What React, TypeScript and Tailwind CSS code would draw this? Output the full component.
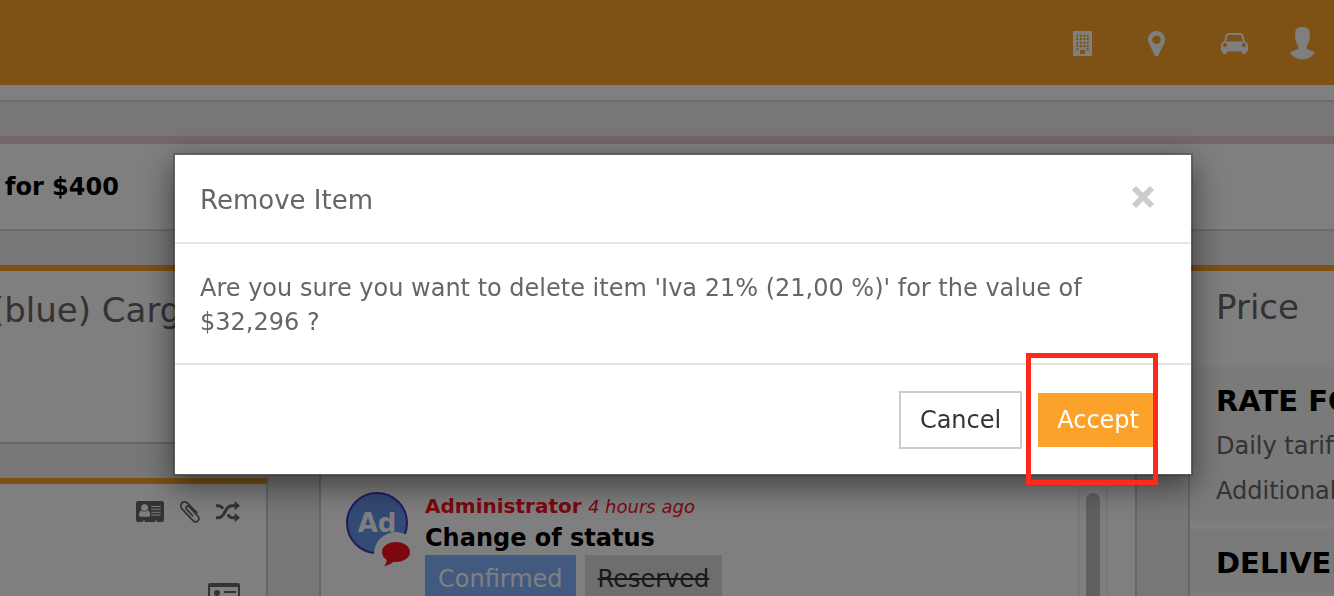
import { useState } from "react";

interface IconProps {
  className?: string;
}

const BuildingIcon = ({ className }: IconProps) => (
  <svg viewBox="0 0 57 75" fill="currentColor" className={className} aria-hidden="true">
    <path
      fillRule="evenodd"
      d="M2 0h53a2 2 0 0 1 2 2v71a2 2 0 0 1-2 2H2a2 2 0 0 1-2-2V2a2 2 0 0 1 2-2z
      M10 11v6h6v-6z M21 11v6h6v-6z M31 11v6h6v-6z M41 11v6h6v-6z
      M10 21v6h6v-6z M21 21v6h6v-6z M31 21v6h6v-6z M41 21v6h6v-6z
      M10 32v6h6v-6z M21 32v6h6v-6z M31 32v6h6v-6z M41 32v6h6v-6z
      M10 42v6h6v-6z M21 42v6h6v-6z M31 42v6h6v-6z M41 42v6h6v-6z
      M10 52v6h6v-6z M41 52v6h6v-6z M21 57v11h15V57z"
    />
  </svg>
);

const PinIcon = ({ className }: IconProps) => (
  <svg viewBox="0 0 52 79" fill="currentColor" className={className} aria-hidden="true">
    <path
      fillRule="evenodd"
      d="M26 0C11 0 0 12 0 26c0 5 1 9 3 13l18 37c2 4 8 4 10 0l18-37c2-4 3-8 3-13C52 12 41 0 26 0z M26 14a13 13 0 1 1 0 26a13 13 0 0 1 0-26z"
    />
  </svg>
);

const CarIcon = ({ className }: IconProps) => (
  <svg viewBox="0 0 79 64" fill="currentColor" className={className} aria-hidden="true">
    <path
      fillRule="evenodd"
      d="M23 0h33c5 0 9 3 10 8l4 17c5 1 9 5 9 10v17c0 1-1 2-2 2h-3v4c0 8-12 8-12 0v-4H17v4c0 8-12 8-12 0v-4H2c-1 0-2-1-2-2V35c0-5 4-9 9-10l4-17c1-5 5-8 10-8z
      M23 6c-2 0-3 1-4 3l-4 16h49L60 9c-1-2-2-3-4-3z
      M12 29a6 6 0 1 0 0 12a6 6 0 0 0 0-12z M67 29a6 6 0 1 0 0 12a6 6 0 0 0 0-12z"
    />
  </svg>
);

const UserIcon = ({ className }: IconProps) => (
  <svg viewBox="0 0 76 98" fill="currentColor" className={className} aria-hidden="true">
    <path d="M38 0c14 0 21 5 22 16v14c1 4 0 8-2 12c-2 6-4 12-7 16v8c4 5 19 6 25 12c-9 12-22 20-38 20S9 90 0 78c6-6 21-7 25-12v-8c-3-4-5-10-7-16c-2-4-3-8-2-12V16C17 5 24 0 38 0z" />
  </svg>
);

const AddressCardIcon = ({ className }: IconProps) => (
  <svg viewBox="0 0 83 63" fill="currentColor" className={className} aria-hidden="true">
    <path
      fillRule="evenodd"
      d="M6 0h71a6 6 0 0 1 6 6v50a6 6 0 0 1-6 6H62v-4h-5v4H26v-4h-5v4H6a6 6 0 0 1-6-6V6a6 6 0 0 1 6-6z
      M25 10c-7 0-10 5-10 10c0 3 1 6 3 8c-6 0-9 6-9 13c0 4 2 6 5 6h23c3 0 5-2 5-6c0-7-3-13-9-13c2-2 3-5 3-8c0-5-4-10-11-10z
      M45 15v3h28v-3z M45 23v3h28v-3z M45 32v3h28v-3z M45 40v3h28v-3z"
    />
    <path d="M17 28q8 6 16 0" fill="none" stroke="currentColor" strokeWidth="2" />
  </svg>
);

const PaperclipIcon = ({ className }: IconProps) => (
  <svg
    viewBox="0 0 57 63"
    fill="none"
    stroke="currentColor"
    strokeWidth="5"
    strokeLinecap="round"
    strokeLinejoin="round"
    className={className}
    aria-hidden="true"
  >
    <path d="M36 42L19 24c-5-6 2-13 8-7l23 25c10 11-3 24-13 14L7 24C-5 11 10-5 22 7l26 26" />
  </svg>
);

const ShuffleIcon = ({ className }: IconProps) => (
  <svg viewBox="0 0 72 64" fill="currentColor" className={className} aria-hidden="true">
    <path d="M56 0l16 14l-16 14z M56 36l16 14l-16 14z" />
    <path
      fill="none"
      stroke="currentColor"
      strokeWidth="9"
      d="M0 14h7c6 0 10 3 14 9 M35 41c4 6 8 9 14 9h8 M0 50h7c9 0 14-6 18-14l5-9c4-8 9-13 18-13h9"
    />
  </svg>
);

const ContactIcon = ({ className }: IconProps) => (
  <svg viewBox="0 0 96 72" fill="currentColor" className={className} aria-hidden="true">
    <path
      fillRule="evenodd"
      d="M6 0h84a6 6 0 0 1 6 6v60a6 6 0 0 1-6 6H6a6 6 0 0 1-6-6V6a6 6 0 0 1 6-6z M6 12v54h84V12z"
    />
    <circle cx="27" cy="30" r="9" />
    <path d="M48 24h36v6H48z M48 42h36v6H48z M14 56c0-18 26-18 26 0z" />
  </svg>
);

const CommentIcon = ({ className }: IconProps) => (
  <svg viewBox="0 0 84 72" fill="currentColor" className={className} aria-hidden="true">
    <path d="M42 0c23 0 42 13 42 30S65 60 42 60c-2 0-5 0-7-1c-8 7-17 11-29 13c4-4 8-9 8-18C5 48 0 40 0 30C0 13 19 0 42 0z" />
  </svg>
);

const navItems = [
  { label: "Buildings", icon: <BuildingIcon className="w-[19px]" /> },
  { label: "Locations", icon: <PinIcon className="w-[17px]" /> },
  { label: "Vehicles", icon: <CarIcon className="w-[27px]" /> },
];

const prices = [
  { title: "RATE FOR", lines: ["Daily tariff", "Additional"] },
  { title: "DELIVERY", lines: [] },
];

function Header() {
  return (
    <header className="flex h-[85px] shrink-0 items-center justify-end gap-[42px] bg-[#fca22a] pt-0.5 pr-[19px] text-white">
      <nav className="flex items-center gap-14">
        {navItems.map((item) => (
          <button key={item.label} type="button" aria-label={item.label}>
            {item.icon}
          </button>
        ))}
      </nav>
      <button type="button" aria-label="Account">
        <UserIcon className="w-[25px]" />
      </button>
    </header>
  );
}

function ActivityCard() {
  return (
    <section className="min-w-0 flex-1 border-x-2 border-t-6 border-x-[#ccc] border-t-[#fca22a] bg-white pt-[216px]">
      <div className="flex h-full">
        <article className="flex flex-1 gap-[17px] pt-[5px] pl-[25px]">
          <div className="relative flex size-[62px] shrink-0 items-center justify-center rounded-full border-2 border-[#4834bb] bg-[#6494e8] text-[26px] font-bold text-white">
            Ad
            <span className="absolute top-[38px] left-[26px] flex size-11 items-center justify-center rounded-full bg-white">
              <CommentIcon className="w-7 text-[#f8101a]" />
            </span>
          </div>
          <div className="whitespace-nowrap">
            <p className="text-[20px] leading-7 text-[#f8101a]">
              <strong>Administrator</strong> <em className="text-[18px]">4 hours ago</em>
            </p>
            <h3 className="text-[24px] leading-[34px] font-bold text-black">Change of status</h3>
            <div className="flex gap-[9px] text-[24px] leading-[48px]">
              <span className="bg-[#84b4ff] px-[13px] text-white">Confirmed</span>
              <span className="bg-[#ddd] px-[13px] text-[#333] line-through">Reserved</span>
            </div>
          </div>
        </article>
        <div className="mr-[27px] w-[30px] border-x-2 border-[#f0f0f0] bg-[#fcfcfc] px-[6px] pt-[6px]">
          <div className="h-full rounded-t-full bg-[#c1c1c1]" />
        </div>
      </div>
    </section>
  );
}

function PriceCard() {
  return (
    <section className="w-[146px] shrink-0 overflow-hidden border-t-6 border-l-2 border-t-[#fca22a] border-l-[#ccc] bg-white whitespace-nowrap">
      <h2 className="px-[26px] pt-[11px] pb-[35px] text-[34px] leading-[50px]">Price</h2>
      <div className="flex flex-col gap-2">
        {prices.map((price) => (
          <div key={price.title} className="bg-[#f4f4f4] px-[26px] pt-3 pb-[7px] text-[24px] leading-[45px]">
            <h3 className="text-[29px] leading-[45px] font-bold text-black">{price.title}</h3>
            {price.lines.map((line) => (
              <p key={line}>{line}</p>
            ))}
          </div>
        ))}
      </div>
    </section>
  );
}

interface RemoveDialogProps {
  onClose: () => void;
}

function RemoveDialog({ onClose }: RemoveDialogProps) {
  return (
    <div className="fixed inset-0 flex items-start justify-center bg-black/50 pt-[153px] pl-8">
      <div
        role="dialog"
        aria-modal="true"
        aria-labelledby="remove-title"
        className="w-full max-w-[1020px] border-2 border-black/20 bg-white bg-clip-padding shadow-[0_10px_30px_rgba(0,0,0,0.5)]"
      >
        <div className="flex items-start justify-between border-b-2 border-[#e5e5e5] pt-[27px] pr-[36px] pb-6 pl-[25px]">
          <h2 id="remove-title" className="text-[26px] leading-9">
            Remove Item
          </h2>
          <button type="button" aria-label="Close" onClick={onClose} className="pt-[3px] text-[#ccc]">
            <svg viewBox="0 0 24 24" className="size-6" stroke="currentColor" strokeWidth="6" aria-hidden="true">
              <path d="M3 3l18 18M21 3L3 21" />
            </svg>
          </button>
        </div>
        <p className="px-[25px] pt-[27px] pb-6 text-[24px] leading-[34px]">
          Are you sure you want to delete item 'Iva 21% (21,00 %)' for the value of $32,296 ?
        </p>
        <div className="flex items-center justify-end gap-4 border-t-2 border-[#e5e5e5] pt-[26px] pr-[33px] pb-[25px] text-[24px]">
          <button
            type="button"
            onClick={onClose}
            className="border-2 border-[#ccc] bg-white px-[19px] leading-[54px] text-[#333]"
          >
            Cancel
          </button>
          <div className="relative">
            <button type="button" onClick={onClose} className="block bg-[#fca22a] px-[19px] leading-[54px] text-white">
              Accept
            </button>
            {/* highlight around the confirm action */}
            <span className="pointer-events-none absolute -top-10 right-0 -bottom-[38px] -left-3 border-5 border-[#ff2a1c]" />
          </div>
        </div>
      </div>
    </div>
  );
}

export default function App() {
  const [open, setOpen] = useState(true);

  return (
    <div className="flex h-screen flex-col overflow-hidden bg-[#eee] font-['Verdana','DejaVu_Sans',sans-serif] text-[#666]">
      <Header />
      <div className="h-[17px] shrink-0 border-b-2 border-[#ebccd1] bg-white" />
      <div className="mt-[34px] shrink-0 border-t-8 border-b-2 border-[#ebccd1] bg-white pt-[27px] pb-[25px] pl-[5px] text-[24px] leading-[33px] font-bold text-black">
        for $400
      </div>

      <main className="mt-[34px] flex min-h-0 flex-1 gap-[51px]">
        <div className="flex w-[268px] shrink-0 flex-col gap-[34px]">
          <section className="shrink-0 overflow-hidden border-t-6 border-r-2 border-b-2 border-t-[#fca22a] border-r-[#ccc] border-b-[#ccc] bg-white pt-[14px] pb-[107px]">
            <h2 className="-ml-[9px] text-[34px] leading-[50px] whitespace-nowrap">(blue) Cargo</h2>
          </section>
          <section className="min-h-0 flex-1 border-t-6 border-r-2 border-t-[#fca22a] border-r-[#ccc] bg-white pt-[17px] pr-[26px]">
            <div className="flex items-center justify-end gap-4">
              <button type="button" aria-label="Details">
                <AddressCardIcon className="w-7" />
              </button>
              <button type="button" aria-label="Attachments">
                <PaperclipIcon className="w-5" />
              </button>
              <button type="button" aria-label="Swap">
                <ShuffleIcon className="w-6" />
              </button>
            </div>
            <div className="mt-[60px] flex justify-end">
              <ContactIcon className="w-8 shrink-0" />
            </div>
          </section>
        </div>
        <ActivityCard />
        <PriceCard />
      </main>

      {open && <RemoveDialog onClose={() => setOpen(false)} />}
    </div>
  );
}
